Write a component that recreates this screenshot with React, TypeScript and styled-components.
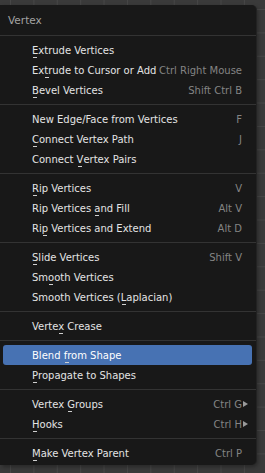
import styled, { createGlobalStyle } from 'styled-components';

const GlobalStyle = createGlobalStyle`
  html, body {
    margin: 0;
    padding: 0;
    height: 100%;
  }
  body {
    background-color: #3a3a3a;
    background-image:
      linear-gradient(to right, #474747 1px, transparent 1px),
      linear-gradient(to bottom, #474747 1px, transparent 1px);
    background-size: 23.4px 23.4px;
    background-position: 10px 9px;
    font-family: 'DejaVu Sans', 'Liberation Sans', sans-serif;
    overflow: hidden;
  }
`;

const Page = styled.div`
  padding-top: 5px;
`;

const Menu = styled.div`
  width: 256px;
  background: #181818;
  border-radius: 0 5px 5px 0;
  box-shadow: 1px 0 0 #222, 2px 2px 4px rgba(0, 0, 0, 0.35);
  padding-bottom: 2px;
`;

const Header = styled.div`
  height: 30px;
  display: flex;
  align-items: center;
  padding-left: 8px;
  font-size: 10.5px;
  color: #a3a3a3;
`;

const Line = styled.div`
  height: 1px;
  background: #333333;
`;

const Separator = styled.div`
  padding: 4px 0;
  & > div {
    height: 1px;
    background: #333333;
  }
`;

const List = styled.div`
  padding-top: 4px;
`;

const Row = styled.div<{ $active?: boolean }>`
  height: 20px;
  margin: 0 4px 0 3px;
  padding: 0 10px 0 29px;
  display: flex;
  align-items: center;
  justify-content: space-between;
  border-radius: 3px;
  font-size: 10px;
  color: ${(p) => (p.$active ? '#ffffff' : '#e4e4e4')};
  background: ${(p) => (p.$active ? '#4772b3' : 'transparent')};
  white-space: nowrap;
`;

const Shortcut = styled.span`
  color: #848484;
  display: flex;
  align-items: center;
`;

const Arrow = styled.span`
  width: 0;
  height: 0;
  border-top: 3px solid transparent;
  border-bottom: 3px solid transparent;
  border-left: 5px solid #9a9a9a;
  margin-left: 1px;
  margin-right: -6px;
`;

const Mnemonic = styled.span`
  position: relative;
  &::after {
    content: '';
    position: absolute;
    left: 1px;
    bottom: -2px;
    width: 4px;
    height: 1px;
    background: #cfcfcf;
  }
`;

type Item = {
  label: string;
  key?: number;
  shortcut?: string;
  sub?: boolean;
  active?: boolean;
};

const groups: Item[][] = [
  [
    { label: 'Extrude Vertices', key: 0 },
    { label: 'Extrude to Cursor or Add', key: 2, shortcut: 'Ctrl Right Mouse' },
    { label: 'Bevel Vertices', key: 0, shortcut: 'Shift Ctrl B' },
  ],
  [
    { label: 'New Edge/Face from Vertices', shortcut: 'F' },
    { label: 'Connect Vertex Path', key: 0, shortcut: 'J' },
    { label: 'Connect Vertex Pairs', key: 8 },
  ],
  [
    { label: 'Rip Vertices', key: 0, shortcut: 'V' },
    { label: 'Rip Vertices and Fill', key: 13, shortcut: 'Alt V' },
    { label: 'Rip Vertices and Extend', key: 2, shortcut: 'Alt D' },
  ],
  [
    { label: 'Slide Vertices', key: 0, shortcut: 'Shift V' },
    { label: 'Smooth Vertices', key: 2 },
    { label: 'Smooth Vertices (Laplacian)', key: 17 },
  ],
  [{ label: 'Vertex Crease', key: 5 }],
  [
    { label: 'Blend from Shape', key: 6, active: true },
    { label: 'Propagate to Shapes', key: 0 },
  ],
  [
    { label: 'Vertex Groups', key: 7, shortcut: 'Ctrl G', sub: true },
    { label: 'Hooks', key: 0, shortcut: 'Ctrl H', sub: true },
  ],
  [{ label: 'Make Vertex Parent', key: 0, shortcut: 'Ctrl P' }],
];

const Label = ({ text, at }: { text: string; at?: number }) => {
  if (at === undefined) return <span>{text}</span>;
  return (
    <span>
      {text.slice(0, at)}
      <Mnemonic>{text[at]}</Mnemonic>
      {text.slice(at + 1)}
    </span>
  );
};

export default function App() {
  return (
    <Page>
      <GlobalStyle />
      <Menu>
        <Header>Vertex</Header>
        <Line />
        <List>
          {groups.map((g, gi) => (
            <div key={gi}>
              {gi > 0 && (
                <Separator>
                  <div />
                </Separator>
              )}
              {g.map((it) => (
                <Row key={it.label} $active={it.active}>
                  <Label text={it.label} at={it.key} />
                  {it.shortcut && (
                    <Shortcut>
                      {it.shortcut}
                      {it.sub && <Arrow />}
                    </Shortcut>
                  )}
                </Row>
              ))}
            </div>
          ))}
        </List>
      </Menu>
    </Page>
  );
}
